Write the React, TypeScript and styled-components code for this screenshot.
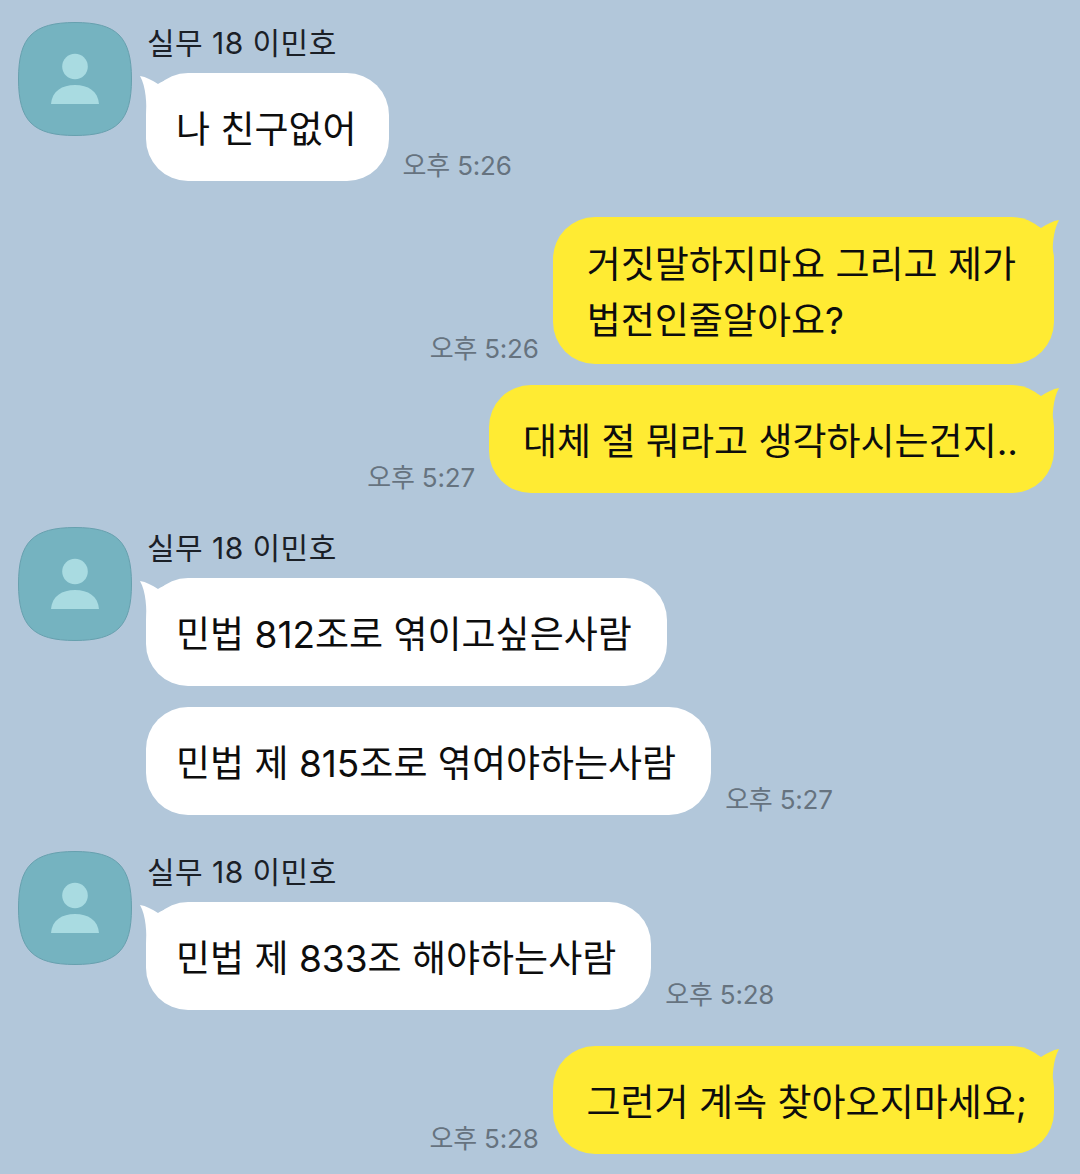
import React, { FC } from "react";
import styled, { createGlobalStyle } from "styled-components";

const GlobalStyle = createGlobalStyle`
    html, body {
        margin: 0;
        padding: 0;
        background: #b2c7da;
    }
    body {
        font-family: Inter, "Noto Sans CJK KR", "Noto Sans", sans-serif;
    }
`;

const Page = styled.div`
    width: 1080px;
    height: 1174px;
    box-sizing: border-box;
    padding: 22px 26px 0 18px;
    background: #b2c7da;
    overflow: hidden;
    display: flex;
    flex-direction: column;
`;

const Group = styled.div<{ $top: number }>`
    display: flex;
    gap: 14px;
    margin-top: ${(props) => props.$top}px;
`;

const AvatarBox = styled.div`
    width: 114px;
    height: 114px;
    flex-shrink: 0;
`;

const Column = styled.div`
    display: flex;
    flex-direction: column;
    gap: 21px;
    min-width: 0;
`;

const NameBlock = styled.div`
    display: flex;
    flex-direction: column;
`;

const Name = styled.div`
    height: 51px;
    margin-left: 1px;
    font-size: 30px;
    line-height: 43px;
    letter-spacing: 0.45px;
    color: #1b2027;
`;

const Row = styled.div<{ $mine?: boolean; $top?: number }>`
    display: flex;
    align-items: flex-end;
    gap: 14px;
    justify-content: ${(props) => (props.$mine ? "flex-end" : "flex-start")};
    margin-top: ${(props) => props.$top ?? 0}px;
`;

const Bubble = styled.div<{ $mine?: boolean; $end?: number }>`
    position: relative;
    box-sizing: border-box;
    min-height: 108px;
    padding: 20px ${(props) => props.$end ?? (props.$mine ? 31 : 35)}px 15px ${(props) => (props.$mine ? 34 : 30)}px;
    display: flex;
    align-items: center;
    border-radius: 42px;
    background: ${(props) => (props.$mine ? "#ffeb33" : "#ffffff")};
    color: #0d0d0d;
    font-size: 37px;
    line-height: 56px;
    white-space: pre;
`;

const TailSvg = styled.svg<{ $mine?: boolean }>`
    position: absolute;
    top: 2px;
    width: 30px;
    height: 48px;
    ${(props) => (props.$mine ? "right: -5px; transform: scaleX(-1);" : "left: -6px;")}
`;

const Time = styled.span`
    font-size: 26px;
    line-height: 31px;
    letter-spacing: -0.2px;
    color: #66737f;
    white-space: nowrap;
`;

const Tail: FC<{ mine?: boolean }> = ({ mine }) => (
    <TailSvg $mine={mine} viewBox="0 0 30 48">
        <path
            d="M0 1 C6 2 12 5 18 9 C21 7 25 5 30 4 L30 48 L6 44 C7 28 6 12 0 1 Z"
            fill={mine ? "#ffeb33" : "#ffffff"}
        />
    </TailSvg>
);

const Avatar: FC = () => (
    <AvatarBox>
        <svg width="114" height="114" viewBox="0 0 114 114">
            <path
                d="M57 .5 C99 .5 113.500 15 113.500 57 C113.500 99 99 113.500 57 113.500 C15 113.500 .5 99 .5 57 C.5 15 15 .5 57 .5 Z"
                fill="#75b3c0"
                stroke="#67a0ae"
            />
            <circle cx="57" cy="44.500" r="12.800" fill="#a9dbe1" />
            <path d="M33 82 C34 69 44 63 57 63 C70 63 80 69 81 82 Z" fill="#a9dbe1" />
        </svg>
    </AvatarBox>
);

const Message: FC<{ text: string; time?: string; mine?: boolean; top?: number; tail?: boolean; end?: number }> = ({
    text,
    time,
    mine,
    top,
    tail,
    end,
}) => (
    <Row $mine={mine} $top={top}>
        {mine && time && <Time>{time}</Time>}
        <Bubble $mine={mine} $end={end}>
            {tail && <Tail mine={mine} />}
            {text}
        </Bubble>
        {!mine && time && <Time>{time}</Time>}
    </Row>
);

const App: FC = () => {
    return (
        <Page>
            <GlobalStyle />
            <Group $top={0}>
                <Avatar />
                <Column>
                    <NameBlock>
                        <Name>실무 18 이민호</Name>
                        <Message text="나 친구없어" time="오후 5:26" tail end={32} />
                    </NameBlock>
                </Column>
            </Group>

            <Message mine tail top={36} end={38} text={"거짓말하지마요 그리고 제가\n법전인줄알아요?"} time="오후 5:26" />
            <Message mine tail top={21} end={36} text="대체 절 뭐라고 생각하시는건지.." time="오후 5:27" />

            <Group $top={34}>
                <Avatar />
                <Column>
                    <NameBlock>
                        <Name>실무 18 이민호</Name>
                        <Message text="민법 812조로 엮이고싶은사람" tail />
                    </NameBlock>
                    <Message text="민법 제 815조로 엮여야하는사람" time="오후 5:27" />
                </Column>
            </Group>

            <Group $top={36}>
                <Avatar />
                <Column>
                    <NameBlock>
                        <Name>실무 18 이민호</Name>
                        <Message text="민법 제 833조 해야하는사람" time="오후 5:28" tail />
                    </NameBlock>
                </Column>
            </Group>

            <Message mine tail top={36} end={27} text="그런거 계속 찾아오지마세요;" time="오후 5:28" />
        </Page>
    );
};

export default App;
